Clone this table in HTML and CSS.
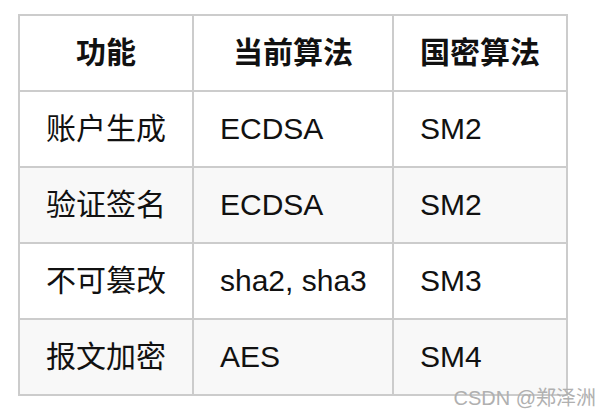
FILE: index.html
```html
<!DOCTYPE html>
<html lang="zh-CN">
<head>
<meta charset="utf-8">
<title>算法对照</title>
<link rel="stylesheet" href="styles.css">
</head>
<body>
<table class="algo">
  <colgroup>
    <col class="c1">
    <col class="c2">
    <col class="c3">
  </colgroup>
  <thead>
    <tr><th>功能</th><th>当前算法</th><th>国密算法</th></tr>
  </thead>
  <tbody>
    <tr><td>账户生成</td><td>ECDSA</td><td>SM2</td></tr>
    <tr><td>验证签名</td><td>ECDSA</td><td>SM2</td></tr>
    <tr><td>不可篡改</td><td>sha2, sha3</td><td>SM3</td></tr>
    <tr><td>报文加密</td><td>AES</td><td>SM4</td></tr>
  </tbody>
</table>
<div class="mark">CSDN @郑泽洲</div>
</body>
</html>
```
FILE: styles.css
```css
html, body {
  margin: 0;
  background: #fff;
}
body {
  padding: 14px 0 0 18px;
  font-family: "Liberation Sans", "Noto Sans CJK SC", sans-serif;
  color: #111;
  position: relative;
  height: 416px;
  box-sizing: border-box;
}
.algo {
  border-collapse: collapse;
  table-layout: fixed;
  width: 550px;
  font-size: 30px;
}
.c1 { width: 174px; }
.c2 { width: 200px; }
.c3 { width: 174px; }
.algo th,
.algo td {
  border: 2px solid #ccc;
  height: 76px;
  padding: 0 26px;
  line-height: 36px;
  box-sizing: border-box;
  white-space: nowrap;
}
.algo th {
  font-weight: 700;
  text-align: center;
}
.algo td {
  text-align: left;
}
.algo tbody tr:nth-child(even) td {
  background: #f8f8f8;
}
.mark {
  position: absolute;
  right: 6px;
  bottom: 5px;
  font-size: 20px;
  color: #b0b0b0;
  font-family: "Liberation Sans", "Noto Sans CJK SC", sans-serif;
}
```
